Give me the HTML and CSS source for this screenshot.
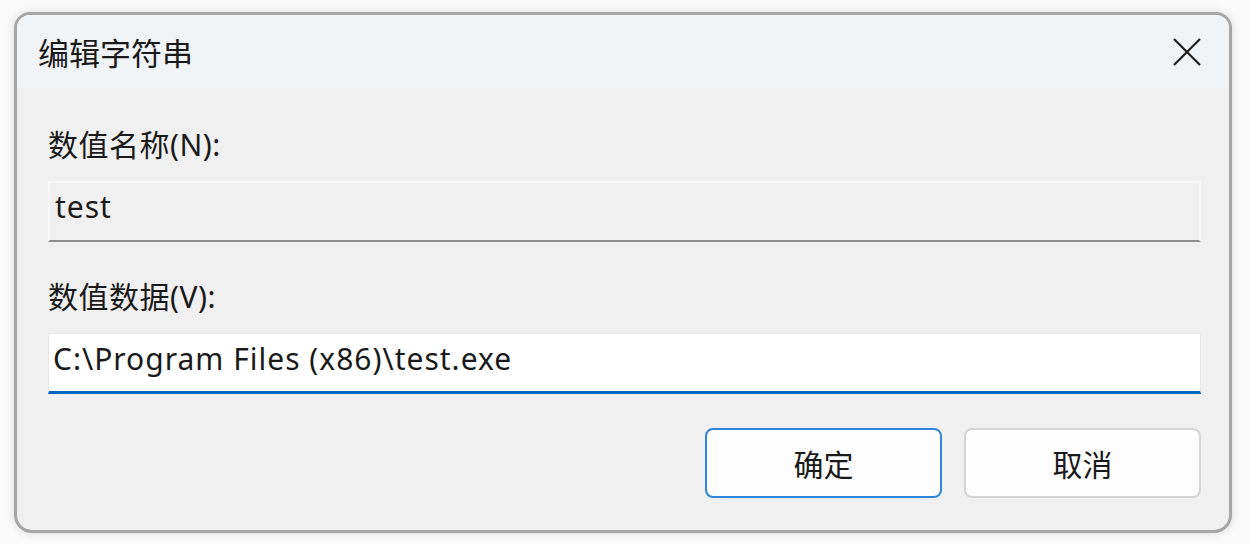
FILE: index.html
```html
<!DOCTYPE html>
<html lang="zh-CN">
<head>
    <meta charset="UTF-8">
    <title>编辑字符串</title>
    <link rel="stylesheet" href="styles.css">
</head>
<body>
    <div class="dialog">
        <div class="titlebar">
            <span class="title">编辑字符串</span>
            <button class="close" aria-label="关闭">
                <svg width="28" height="28" viewBox="0 0 28 28">
                    <path d="M1 1 L27 27 M27 1 L1 27" stroke="#1f1f1f" stroke-width="2.2" fill="none"/>
                </svg>
            </button>
        </div>
        <div class="content">
            <label class="field-label">数值名称(N):</label>
            <div class="field readonly">test</div>
            <label class="field-label second">数值数据(V):</label>
            <div class="field active">C:\Program Files (x86)\test.exe</div>
            <div class="actions">
                <button class="btn primary">确定</button>
                <button class="btn">取消</button>
            </div>
        </div>
    </div>
</body>
</html>
```

FILE: styles.css
```css
body {
    margin: 0;
    padding: 12px 17px 11px 14px;
    background-color: #fafafa;
    font-family: "Noto Sans", "Noto Sans CJK SC", sans-serif;
    color: #1a1a1a;
}
.dialog {
    width: 1212px;
    height: 515px;
    border: 3px solid #a6a6a6;
    border-radius: 16px 16px 18px 18px;
    background-color: #f0f0f0;
    box-shadow: 0 0 10px rgba(0,0,0,0.12);
    overflow: hidden;
    display: flex;
    flex-direction: column;
}
.titlebar {
    height: 73px;
    flex: none;
    display: flex;
    align-items: center;
    justify-content: space-between;
    padding: 0 28px 0 21px;
    background-color: #f1f4f7;
}
.title {
    font-family: "Noto Sans CJK SC", sans-serif;
    font-size: 31px;
    line-height: 36px;
}
.close {
    border: none;
    background: none;
    padding: 0;
    width: 28px;
    height: 28px;
    display: flex;
}
.content {
    flex: 1;
    display: flex;
    flex-direction: column;
    padding: 40px 28px 0 31px;
}
.field-label {
    font-size: 30px;
    line-height: 34px;
    height: 34px;
    margin-bottom: 19px;
    letter-spacing: 0.5px;
}
.field-label.second { margin-top: 38px; }
.field {
    height: 61px;
    box-sizing: border-box;
    font-size: 30px;
    letter-spacing: 1px;
}
.field.readonly {
    background-color: #f0f0f0;
    border: 2px solid #f8f8f8;
    border-bottom: 2px solid #8c8c8c;
    line-height: 48px;
    padding-left: 5px;
}
.field.active {
    background-color: #fff;
    border: 1px solid #e6e6e6;
    border-bottom: 3px solid #0067c0;
    line-height: 50px;
    padding-left: 4px;
}
.actions {
    display: flex;
    justify-content: flex-end;
    gap: 22px;
    margin-top: 34px;
}
.btn {
    width: 237px;
    height: 70px;
    font-family: "Noto Sans CJK SC", sans-serif;
    font-size: 30px;
    color: #1a1a1a;
    background-color: #fdfdfd;
    border: 2px solid #d4d4d4;
    border-radius: 8px;
}
.btn.primary {
    border-color: #2f86d8;
}
```
